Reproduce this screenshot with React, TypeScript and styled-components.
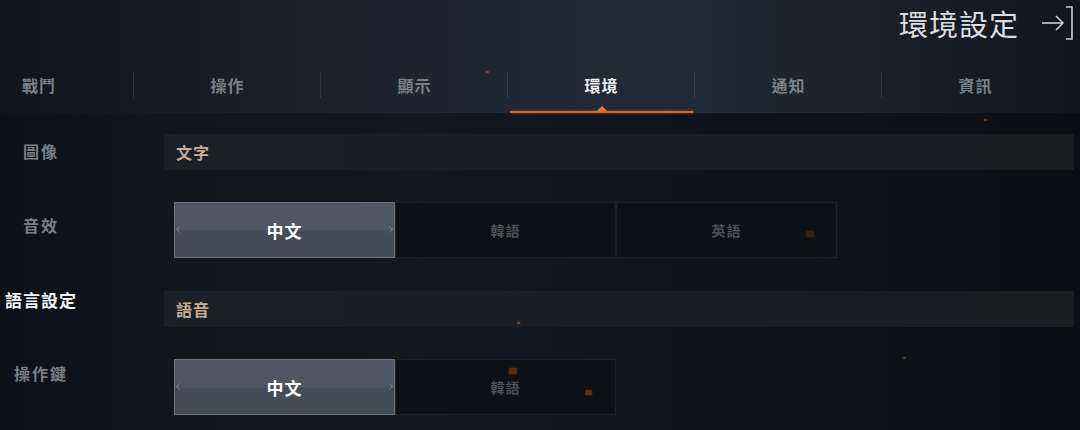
import React from "react";
import styled, { createGlobalStyle } from "styled-components";

const GlobalStyle = createGlobalStyle`
  html, body {
    margin: 0;
    padding: 0;
    background: #0d1016;
  }
  * {
    box-sizing: border-box;
  }
`;

const Page = styled.div`
  position: relative;
  width: 1080px;
  height: 430px;
  overflow: hidden;
  font-family: "Noto Sans CJK TC", "Noto Sans", sans-serif;
  background: #0d1016;
`;

const Top = styled.div`
  background: linear-gradient(90deg, #11141b 0%, #1d2330 35%, #222a38 62%, #1a202b 82%, #12151b 100%);
`;

const Header = styled.header`
  height: 60px;
  display: flex;
  align-items: center;
  justify-content: flex-end;
  padding-right: 5px;
  padding-bottom: 14px;
  gap: 20px;
`;

const Title = styled.h1`
  margin: 0;
  font-size: 29px;
  font-weight: 400;
  letter-spacing: 1px;
  color: #dcdee1;
  line-height: 1;
`;

const TabBar = styled.nav`
  height: 53px;
  display: grid;
  grid-template-columns: 134px repeat(5, 187px);
  align-items: stretch;
`;

const Tab = styled.div<{ $active?: boolean; $first?: boolean; $last?: boolean }>`
  position: relative;
  display: flex;
  align-items: center;
  justify-content: ${(p) => (p.$first ? "flex-start" : "center")};
  padding-left: ${(p) => (p.$first ? "22px" : "0")};
  padding-bottom: 4px;
  font-size: 16px;
  font-weight: 700;
  letter-spacing: 1px;
  color: ${(p) => (p.$active ? "#eceef0" : "#7b8087")};

  &::before {
    content: "";
    display: ${(p) => (p.$last ? "none" : "block")};
    position: absolute;
    right: 0;
    top: 12px;
    height: 26px;
    width: 1px;
    background: rgba(255, 255, 255, 0.1);
  }

  &::after {
    content: "";
    display: ${(p) => (p.$active ? "block" : "none")};
    position: absolute;
    left: 2px;
    right: 2px;
    bottom: 0;
    height: 2px;
    background: #d9692a;
    box-shadow: 0 0 3px rgba(230, 110, 40, 0.6);
  }
`;

const TabMark = styled.span`
  position: absolute;
  left: 50%;
  bottom: 2px;
  transform: translateX(-50%);
  width: 0;
  height: 0;
  border-left: 5px solid transparent;
  border-right: 5px solid transparent;
  border-bottom: 5px solid #e47a33;
`;

const Body = styled.div`
  display: flex;
  height: 317px;
  background: linear-gradient(180deg, #0a0c11 0px, #0f1218 6px, #0f1218 100%);
`;

const Sidebar = styled.aside`
  width: 134px;
  flex-shrink: 0;
  display: flex;
  flex-direction: column;
  padding-top: 1px;
  background: linear-gradient(90deg, #0d1016 0%, #11151c 100%);
`;

const SideItem = styled.div<{ $active?: boolean }>`
  height: 74px;
  width: 82px;
  flex-shrink: 0;
  display: flex;
  align-items: center;
  justify-content: center;
  font-size: ${(p) => (p.$active ? "17px" : "16px")};
  font-weight: 700;
  letter-spacing: ${(p) => (p.$active ? "1px" : "2px")};
  color: ${(p) => (p.$active ? "#f2f3f4" : "#7a7f86")};
`;

const Content = styled.main`
  flex: 1;
  padding: 21px 6px 0 30px;
  display: flex;
  flex-direction: column;
  background: linear-gradient(90deg, #11151c 0%, #131821 30%, #0f1218 70%, #0c0e13 100%);
`;

const SectionHeader = styled.div`
  height: 36px;
  flex-shrink: 0;
  display: flex;
  align-items: center;
  padding-left: 12px;
  background: linear-gradient(90deg, #1b1f26 0%, #1a1d22 60%, #1b1d21 100%);
  color: #c6ae93;
  font-size: 16px;
  font-weight: 700;
  letter-spacing: 1px;
`;

const OptionRow = styled.div`
  display: flex;
  flex-shrink: 0;
  margin: 32px 0 33px 10px;
`;

const Option = styled.div<{ $selected?: boolean }>`
  position: relative;
  width: 221px;
  height: 56px;
  display: flex;
  align-items: center;
  justify-content: center;
  font-weight: 700;
  letter-spacing: 1px;
  font-size: ${(p) => (p.$selected ? "17px" : "14px")};
  color: ${(p) => (p.$selected ? "#ffffff" : "#4b5057")};
  border: 1px solid ${(p) => (p.$selected ? "#6c7380" : "#1c2028")};
  background: ${(p) =>
    p.$selected
      ? "linear-gradient(180deg, #515968 0%, #4e5664 50%, #454c59 52%, #454c59 100%)"
      : "#0d1015"};
`;

const Notch = styled.span<{ $side: "left" | "right" }>`
  position: absolute;
  top: 50%;
  ${(p) => p.$side}: 2px;
  width: 5px;
  height: 5px;
  margin-top: -3px;
  border-left: 1px solid rgba(150, 158, 170, 0.5);
  border-bottom: 1px solid rgba(150, 158, 170, 0.5);
  transform: ${(p) => (p.$side === "left" ? "rotate(45deg)" : "rotate(-135deg)")};
`;

const Ember = styled.span<{ $size: number; $alpha: number }>`
  position: absolute;
  width: ${(p) => p.$size}px;
  height: ${(p) => Math.max(2, p.$size - 2)}px;
  border-radius: 1px;
  background: rgba(220, 110, 40, ${(p) => p.$alpha});
  box-shadow: 0 0 3px rgba(220, 110, 40, ${(p) => p.$alpha * 0.8});
`;

const ExitIcon = () => (
  <svg width="36" height="40" viewBox="0 0 36 40" fill="none" stroke="#c9ccd1" strokeWidth="1.6">
    <path d="M3 20 H24" />
    <path d="M17 13 L24 20 L17 27" />
    <path d="M27 4 H33 V36 H27" />
  </svg>
);

const tabs = ["戰鬥", "操作", "顯示", "環境", "通知", "資訊"];
const sideItems = ["圖像", "音效", "語言設定", "操作鍵"];

const embers = [
  { x: 486, y: 71, s: 3, a: 0.5 },
  { x: 984, y: 119, s: 3, a: 0.5 },
  { x: 806, y: 231, s: 8, a: 0.18 },
  { x: 517, y: 322, s: 3, a: 0.6 },
  { x: 509, y: 368, s: 8, a: 0.35 },
  { x: 585, y: 390, s: 7, a: 0.35 },
  { x: 903, y: 357, s: 3, a: 0.4 },
];

export default function App() {
  return (
    <>
      <GlobalStyle />
      <Page>
        <Top>
          <Header>
            <Title>環境設定</Title>
            <ExitIcon />
          </Header>
          <TabBar>
            {tabs.map((t, i) => (
              <Tab key={t} $first={i === 0} $last={i === tabs.length - 1} $active={t === "環境"}>
                {t}
                {t === "環境" && <TabMark />}
              </Tab>
            ))}
          </TabBar>
        </Top>
        <Body>
          <Sidebar>
            {sideItems.map((s) => (
              <SideItem key={s} $active={s === "語言設定"}>
                {s}
              </SideItem>
            ))}
          </Sidebar>
          <Content>
            <SectionHeader>文字</SectionHeader>
            <OptionRow>
              <Option $selected>
                <Notch $side="left" />
                中文
                <Notch $side="right" />
              </Option>
              <Option>韓語</Option>
              <Option>英語</Option>
            </OptionRow>
            <SectionHeader>語音</SectionHeader>
            <OptionRow>
              <Option $selected>
                <Notch $side="left" />
                中文
                <Notch $side="right" />
              </Option>
              <Option>韓語</Option>
            </OptionRow>
          </Content>
        </Body>
        {embers.map((e, i) => (
          <Ember key={i} $size={e.s} $alpha={e.a} style={{ left: e.x, top: e.y }} />
        ))}
      </Page>
    </>
  );
}
